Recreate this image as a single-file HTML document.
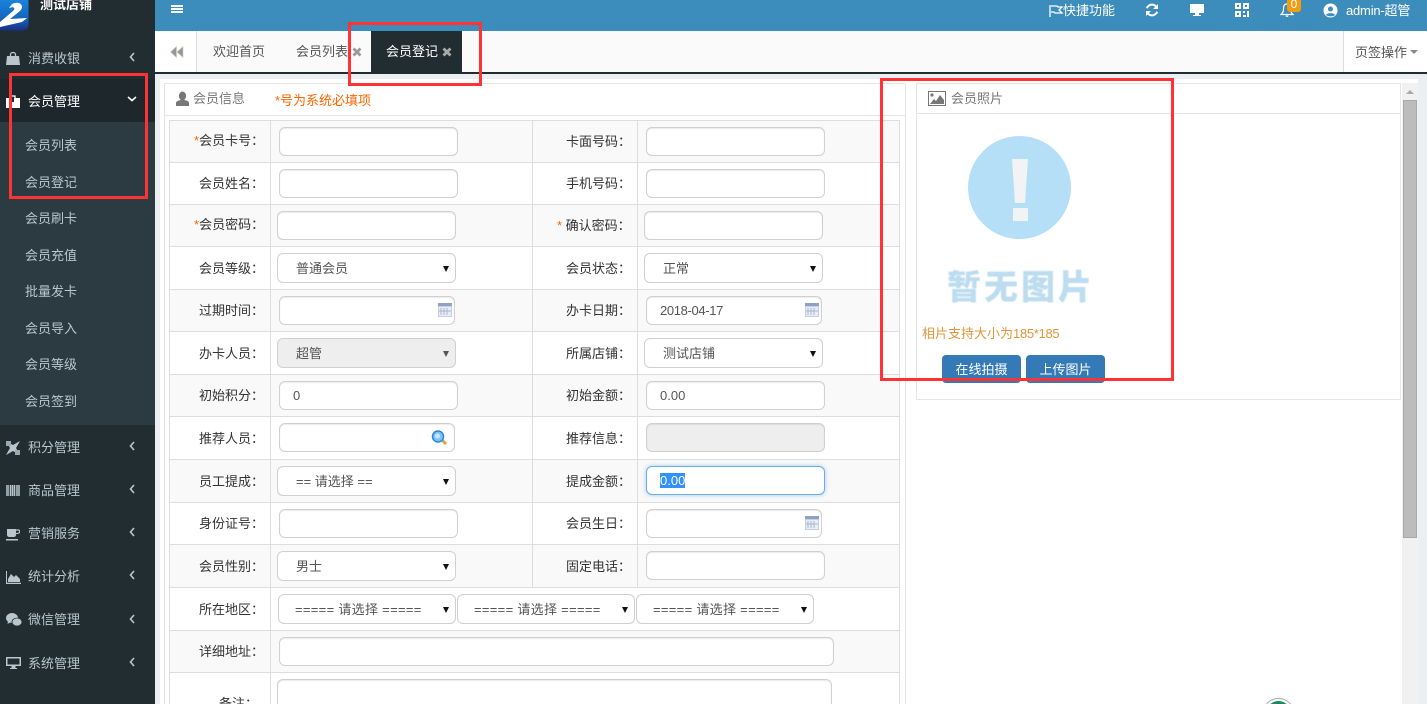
<!DOCTYPE html>
<html lang="zh"><head><meta charset="utf-8"><title>会员登记</title>
<style>
html,body{margin:0;padding:0;width:1427px;height:704px;overflow:hidden;background:#ebeff2}
body{position:relative;font:13px/16px "WenQuanYi Zen Hei","Liberation Sans","Noto Sans CJK SC",sans-serif;color:#333}
div,svg{position:absolute;box-sizing:border-box}
.t{white-space:nowrap;height:16px;margin-top:1px}
.s{color:#b8c7ce}
.w{color:#fff}
.g{color:#555}
.l{color:#333}
.r{color:#f60}
.h{height:1px;background:#ddd}
.v{width:1px;background:#ddd}
.b{background:#f9f9f9;height:42px}
.i,.sel{border:1px solid #d0d0d0;border-radius:6px;background:#fff;box-shadow:inset 0 1px 1px rgba(0,0,0,.075);color:#555;padding:0 0 0 13px;height:29px;line-height:27px;white-space:nowrap;font-family:"Liberation Sans","WenQuanYi Zen Hei",sans-serif}
.sel{height:30px;line-height:30px;box-shadow:none;padding-left:18px;font-family:"WenQuanYi Zen Hei","Liberation Sans",sans-serif}
.a{width:0;height:0;border-left:3px solid transparent;border-right:3px solid transparent;border-top:6px solid #111}
.chev{left:129px}
.red{border:3px solid #f33;z-index:10;background:none}
</style></head><body>

<!-- header -->
<div style="left:155px;top:0;width:1272px;height:31px;background:#3c8dbc"></div>
<div style="left:171px;top:5px;width:12px;height:2px;background:#fff"></div>
<div style="left:171px;top:8px;width:12px;height:2px;background:#fff"></div>
<div style="left:171px;top:11px;width:12px;height:2px;background:#fff"></div>
<svg style="left:1049px;top:4px" width="15" height="13" viewBox="0 0 15 13"><path d="M1 1V13M2 2H8L9 3H13L10 6L13 9H6L5 8H2" fill="none" stroke="#fff" stroke-width="1.3"/></svg>
<div class="t w" style="left:1063px;top:2px">快捷功能</div>
<svg style="left:1145px;top:3px" width="14" height="14" viewBox="0 0 14 14"><path d="M12 5.500A5.200 5.200 0 0 0 3 3.500L1.500 5M2 8.500A5.200 5.200 0 0 0 11 10.500L12.500 9" fill="none" stroke="#fff" stroke-width="2"/><path d="M13 1V6H8zM1 13V8H6z" fill="#fff"/></svg>
<svg style="left:1189px;top:3px" width="16" height="14" viewBox="0 0 16 14"><path d="M1 1H15V10H1z" fill="#fff"/><path d="M6 10H10V12H12V13H4V12H6z" fill="#fff"/></svg>
<svg style="left:1235px;top:3px" width="14" height="14" viewBox="0 0 14 14"><path d="M0 0H6V6H0zM8 0H14V6H8zM0 8H6V14H0z" fill="#fff"/><path d="M2 2H4V4H2zM10 2H12V4H10zM2 10H4V12H2z" fill="#3c8dbc"/><path d="M8 8H10V10H8zM12 8H14V14H12zM8 12H11V14H8z" fill="#fff"/></svg>
<svg style="left:1280px;top:3px" width="14" height="15" viewBox="0 0 14 15"><path d="M7 1C4 1 3.500 3 3.500 6C3.500 9 2.500 10 1 11.500H13C11.500 10 10.500 9 10.500 6C10.500 3 10 1 7 1z" fill="none" stroke="#fff" stroke-width="1.200"/><path d="M5.500 12.500A1.500 1.500 0 0 0 8.500 12.500z" fill="#fff"/></svg>
<div style="left:1287px;top:-2px;width:14px;height:14px;background:#f39c12;border-radius:3px;color:#fff;text-align:center;font:12px/12px 'Liberation Sans',sans-serif">0</div>
<svg style="left:1323px;top:3px" width="15" height="15" viewBox="0 0 15 15"><circle cx="7.500" cy="7.500" r="7" fill="#fff"/><circle cx="7.500" cy="6" r="2.500" fill="#3c8dbc"/><path d="M3 12C4 9.500 11 9.500 12 12C10 13.800 5 13.800 3 12z" fill="#3c8dbc"/></svg>
<div class="t w" style="left:1346px;top:2px;font-family:'Liberation Sans','WenQuanYi Zen Hei',sans-serif;font-size:13px;letter-spacing:-.2px">admin-超管</div>

<!-- tabs -->
<div style="left:155px;top:31px;width:1272px;height:41px;background:#fafafa"></div>
<div style="left:155px;top:31px;width:41px;height:41px;background:#fff"></div>
<div style="left:196px;top:31px;width:1px;height:41px;background:#ddd"></div>
<svg style="left:170px;top:46px" width="14" height="12" viewBox="0 0 14 12"><path d="M6.500 0.500V11.500L0.500 6zM13 0.500V11.500L7 6z" fill="#8a9aa8" stroke="#e8c79a" stroke-width=".6"/></svg>
<div class="t g" style="left:213px;top:43px">欢迎首页</div>
<div class="t g" style="left:296px;top:43px">会员列表</div>
<svg style="left:352px;top:47px" width="10" height="10" viewBox="0 0 10 10"><path d="M1.500 1.500L8.500 8.500M8.500 1.500L1.500 8.500" stroke="#999" stroke-width="2.800"/></svg>
<div style="left:371px;top:31px;width:91px;height:41px;background:#222d32"></div>
<div class="t w" style="left:386px;top:43px">会员登记</div>
<svg style="left:442px;top:47px" width="10" height="10" viewBox="0 0 10 10"><path d="M1.500 1.500L8.500 8.500M8.500 1.500L1.500 8.500" stroke="#aaa" stroke-width="2.800"/></svg>
<div style="left:1343px;top:31px;width:84px;height:41px;background:#fff;border-left:1px solid #ddd"></div>
<div class="t g" style="left:1355px;top:44px">页签操作</div>
<div style="left:1410px;top:50px;width:0;height:0;border-left:4px solid transparent;border-right:4px solid transparent;border-top:4px solid #888"></div>
<div style="left:155px;top:72px;width:1272px;height:2px;background:#222d32"></div>

<!-- content -->
<div style="left:160px;top:79px;width:1258px;height:625px;background:#fff"></div>

<!-- left panel -->
<div style="left:164px;top:83px;width:742px;height:621px;border:1px solid #e5e5e5;border-bottom:0"></div>
<div style="left:164px;top:115px;width:742px;height:1px;background:#e5e5e5"></div>
<svg style="left:176px;top:91px" width="13" height="16" viewBox="0 0 13 16"><ellipse cx="6.500" cy="5" rx="3.600" ry="4.500" fill="#777"/><path d="M0 15V12C0 10 3 9.500 4.500 9H8.500C10 9.500 13 10 13 12V15z" fill="#777"/></svg>
<div class="t" style="left:193px;top:90px;color:#777">会员信息</div>
<div class="t r" style="left:275px;top:92px">*号为系统必填项</div>

<!-- table bg -->
<div class="b" style="left:170px;top:121px;width:729px"></div>
<div class="b" style="left:170px;top:205px;width:729px"></div>
<div class="b" style="left:170px;top:290px;width:729px"></div>
<div class="b" style="left:170px;top:375px;width:729px"></div>
<div class="b" style="left:170px;top:460px;width:729px"></div>
<div class="b" style="left:170px;top:545px;width:729px"></div>
<div class="b" style="left:170px;top:631px;width:729px"></div>
<div class="h" style="left:169px;top:120px;width:731px"></div>
<div class="h" style="left:169px;top:162px;width:731px"></div>
<div class="h" style="left:169px;top:204px;width:731px"></div>
<div class="h" style="left:169px;top:246px;width:731px"></div>
<div class="h" style="left:169px;top:289px;width:731px"></div>
<div class="h" style="left:169px;top:331px;width:731px"></div>
<div class="h" style="left:169px;top:374px;width:731px"></div>
<div class="h" style="left:169px;top:416px;width:731px"></div>
<div class="h" style="left:169px;top:459px;width:731px"></div>
<div class="h" style="left:169px;top:502px;width:731px"></div>
<div class="h" style="left:169px;top:544px;width:731px"></div>
<div class="h" style="left:169px;top:587px;width:731px"></div>
<div class="h" style="left:169px;top:630px;width:731px"></div>
<div class="h" style="left:169px;top:672px;width:731px"></div>
<div class="v" style="left:169px;top:120px;height:584px"></div>
<div class="v" style="left:270px;top:120px;height:584px"></div>
<div class="v" style="left:532px;top:120px;height:467px"></div>
<div class="v" style="left:637px;top:120px;height:467px"></div>
<div class="v" style="left:899px;top:120px;height:584px"></div>

<!-- labels left -->
<div class="t" style="left:194px;top:132px"><span class="r">*</span>会员卡号：</div>
<div class="t" style="left:199px;top:175px">会员姓名：</div>
<div class="t" style="left:194px;top:216px"><span class="r">*</span>会员密码：</div>
<div class="t" style="left:199px;top:260px">会员等级：</div>
<div class="t" style="left:199px;top:302px">过期时间：</div>
<div class="t" style="left:199px;top:345px">办卡人员：</div>
<div class="t" style="left:199px;top:387px">初始积分：</div>
<div class="t" style="left:199px;top:430px">推荐人员：</div>
<div class="t" style="left:199px;top:473px">员工提成：</div>
<div class="t" style="left:199px;top:515px">身份证号：</div>
<div class="t" style="left:199px;top:558px">会员性别：</div>
<div class="t" style="left:199px;top:601px">所在地区：</div>
<div class="t" style="left:199px;top:643px">详细地址：</div>
<div class="t" style="left:219px;top:695px">备注：</div>

<!-- labels right -->
<div class="t" style="left:566px;top:133px">卡面号码：</div>
<div class="t" style="left:566px;top:175px">手机号码：</div>
<div class="t" style="left:557px;top:217px"><span class="r">*</span> 确认密码：</div>
<div class="t" style="left:566px;top:260px">会员状态：</div>
<div class="t" style="left:566px;top:302px">办卡日期：</div>
<div class="t" style="left:566px;top:345px">所属店铺：</div>
<div class="t" style="left:566px;top:387px">初始金额：</div>
<div class="t" style="left:566px;top:430px">推荐信息：</div>
<div class="t" style="left:566px;top:473px">提成金额：</div>
<div class="t" style="left:566px;top:515px">会员生日：</div>
<div class="t" style="left:566px;top:558px">固定电话：</div>

<!-- inputs left -->
<div class="i" style="left:279px;top:127px;width:179px"></div>
<div class="i" style="left:279px;top:169px;width:179px"></div>
<div class="i" style="left:277px;top:211px;width:179px"></div>
<div class="sel" style="left:277px;top:253px;width:179px">普通会员<div class="a" style="left:165px;top:12px"></div></div>
<div class="i" style="left:279px;top:296px;width:176px"></div>
<div class="sel" style="left:277px;top:338px;width:179px;background:#eee">超管<div class="a" style="left:165px;top:12px;border-top-color:#555"></div></div>
<div class="i" style="left:279px;top:381px;width:179px">0</div>
<div class="i" style="left:279px;top:423px;width:176px"></div>
<div class="sel" style="left:277px;top:466px;width:179px">== 请选择 ==<div class="a" style="left:165px;top:12px"></div></div>
<div class="i" style="left:279px;top:509px;width:179px"></div>
<div class="sel" style="left:277px;top:551px;width:179px">男士<div class="a" style="left:165px;top:12px"></div></div>
<div class="sel" style="left:278px;top:594px;width:178px;padding-left:16px;letter-spacing:.3px">===== 请选择 =====<div class="a" style="left:164px;top:12px"></div></div>
<div class="sel" style="left:457px;top:594px;width:178px;padding-left:16px;letter-spacing:.3px">===== 请选择 =====<div class="a" style="left:164px;top:12px"></div></div>
<div class="sel" style="left:636px;top:594px;width:178px;padding-left:16px;letter-spacing:.3px">===== 请选择 =====<div class="a" style="left:164px;top:12px"></div></div>
<div class="i" style="left:279px;top:637px;width:555px"></div>
<div class="i" style="left:277px;top:679px;width:555px;height:60px"></div>

<!-- inputs right -->
<div class="i" style="left:646px;top:127px;width:179px"></div>
<div class="i" style="left:646px;top:169px;width:179px"></div>
<div class="i" style="left:644px;top:211px;width:179px"></div>
<div class="sel" style="left:644px;top:253px;width:179px">正常<div class="a" style="left:165px;top:12px"></div></div>
<div class="i" style="left:646px;top:296px;width:176px;letter-spacing:-.35px">2018-04-17</div>
<div class="sel" style="left:644px;top:338px;width:179px">测试店铺<div class="a" style="left:165px;top:12px"></div></div>
<div class="i" style="left:646px;top:381px;width:179px">0.00</div>
<div class="i" style="left:646px;top:423px;width:179px;background:#eee"></div>
<div class="i" style="left:646px;top:466px;width:179px;border-color:#66afe9;box-shadow:0 0 5px rgba(102,175,233,.6)"><span style="background:#3390ff;color:#fff">0.00</span></div>
<div class="i" style="left:646px;top:509px;width:176px"></div>
<div class="i" style="left:646px;top:551px;width:179px"></div>

<!-- calendar icons -->
<svg style="left:438px;top:303px" width="14" height="14" viewBox="0 0 14 14"><rect width="14" height="14" fill="#c5cfe2"/><rect y="0" width="14" height="3" fill="#8fa1c4"/><path d="M1 4H13V13H1z" fill="#e9edf5"/><path d="M3 5V12M6 5V12M9 5V12M1 8H13" stroke="#a9b6d2"/></svg>
<svg style="left:805px;top:303px" width="14" height="14" viewBox="0 0 14 14"><rect width="14" height="14" fill="#c5cfe2"/><rect y="0" width="14" height="3" fill="#8fa1c4"/><path d="M1 4H13V13H1z" fill="#e9edf5"/><path d="M3 5V12M6 5V12M9 5V12M1 8H13" stroke="#a9b6d2"/></svg>
<svg style="left:805px;top:516px" width="14" height="14" viewBox="0 0 14 14"><rect width="14" height="14" fill="#c5cfe2"/><rect y="0" width="14" height="3" fill="#8fa1c4"/><path d="M1 4H13V13H1z" fill="#e9edf5"/><path d="M3 5V12M6 5V12M9 5V12M1 8H13" stroke="#a9b6d2"/></svg>
<!-- search icon -->
<svg style="left:431px;top:430px" width="17" height="16" viewBox="0 0 17 16"><path d="M11 10L15 14" stroke="#e0a040" stroke-width="3"/><circle cx="7" cy="6.500" r="5.500" fill="#7fc4f8" stroke="#2a86dc" stroke-width="1.500"/><circle cx="6.500" cy="6" r="2.500" fill="#c5e6ff"/></svg>

<!-- right panel -->
<div style="left:916px;top:83px;width:485px;height:317px;border:1px solid #e5e5e5"></div>
<div style="left:916px;top:113px;width:485px;height:1px;background:#e5e5e5"></div>
<svg style="left:928px;top:91px" width="18" height="15" viewBox="0 0 18 15"><rect x=".5" y=".5" width="17" height="14" fill="#fff" stroke="#777"/><circle cx="4" cy="4" r="1.600" fill="#777"/><path d="M2 13L6 8L8 10L12 4L16 9V13z" fill="#777"/></svg>
<div class="t" style="left:951px;top:90px;color:#777">会员照片</div>

<!-- placeholder -->
<div style="left:968px;top:136px;width:103px;height:103px;border-radius:50%;background:#b5dff7"></div>
<svg style="left:1010px;top:157px" width="20" height="66" viewBox="0 0 20 66"><path d="M2 2H18L15 46H5z" fill="#f1f3f4"/><rect x="3" y="51" width="15" height="13" fill="#f1f3f4"/></svg>
<div class="t" style="left:947px;top:264px;height:40px;font:900 34px/40px 'Noto Sans CJK SC',sans-serif;letter-spacing:3px;color:#bcdcef;filter:blur(.5px)">暂无图片</div>

<div class="t" style="left:922px;top:325px;color:#e0963a;font-family:'Liberation Sans','WenQuanYi Zen Hei',sans-serif">相片支持大小为<span style="letter-spacing:-.3px">185*185</span></div>
<div class="w" style="left:942px;top:355px;width:79px;height:28px;background:#337ab7;border-radius:4px;text-align:center;line-height:28px;padding-top:1px">在线拍摄</div>
<div class="w" style="left:1026px;top:355px;width:79px;height:28px;background:#337ab7;border-radius:4px;text-align:center;line-height:28px;padding-top:1px">上传图片</div>

<!-- green seal -->
<div style="left:1262px;top:698px;width:33px;height:33px;border-radius:50%;border:1px solid #aaa;background:#fff"></div>
<div style="left:1266px;top:701px;width:25px;height:25px;border-radius:50%;background:#1a8a5a"></div>

<!-- scrollbar -->
<div style="left:1402px;top:83px;width:16px;height:621px;background:#f1f1f1"></div>
<div style="left:1406px;top:90px;width:0;height:0;border-left:4px solid transparent;border-right:4px solid transparent;border-bottom:4px solid #a8a8a8"></div>
<div style="left:1403px;top:100px;width:14px;height:438px;background:#bcbcbc;border:1px solid #a8a8a8"></div>

<!-- sidebar -->
<div style="left:0;top:0;width:155px;height:704px;background:#222d32"></div>
<div style="left:0;top:79px;width:155px;height:43px;background:#1e282c"></div>
<div style="left:0;top:122px;width:155px;height:303px;background:#2c3b41"></div>

<svg style="left:0;top:0" width="29" height="31" viewBox="0 0 29 31"><defs><linearGradient id="lg" x1="0" y1="0" x2="0" y2="1"><stop offset="0" stop-color="#1a8ae0"/><stop offset=".65" stop-color="#1565c0"/><stop offset="1" stop-color="#1a2f80"/></linearGradient></defs><rect x="-4" y="-4" width="32.500" height="34.500" rx="6" fill="url(#lg)"/><path d="M12 4C20 0 25 6 20 11L10 19L27 18L22 22L0 27V22L13 11C16 8 14 6 9 8z" fill="#fff"/></svg>
<div class="t w" style="left:40px;top:-4px;font-weight:bold">测试店铺</div>

<!-- sidebar icons -->
<svg style="left:6px;top:51px" width="14" height="14" viewBox="0 0 14 14"><path d="M1 5H13L14 14H0z" fill="#b8c7ce"/><path d="M4.500 6V3.500C4.500 0.800 9.500 0.800 9.500 3.500V6" fill="none" stroke="#b8c7ce" stroke-width="1.300"/></svg>
<svg style="left:6px;top:95px" width="14" height="13" viewBox="0 0 14 13"><path d="M0 3H14V13H0z" fill="#fff"/><path d="M5 3V1H9V3" fill="none" stroke="#fff" stroke-width="1.300"/><path d="M6 3H8V7H6z" fill="#1e282c"/></svg>
<svg style="left:6px;top:441px" width="14" height="14" viewBox="0 0 14 14"><path d="M0 0L7 4L14 0L10 7L14 14L7 10L0 14L4 7z" fill="#b8c7ce"/><path d="M0 0H5V5H0zM9 9H14V14H9z" fill="#9aa9b0"/></svg>
<svg style="left:6px;top:484px" width="14" height="13" viewBox="0 0 14 13"><path d="M0 1V12M2 1V12M4.500 1V12M6.500 1V12M8.500 1V12M11 1V12M13 1V12" stroke="#b8c7ce" stroke-width="1.500"/></svg>
<svg style="left:6px;top:528px" width="14" height="13" viewBox="0 0 14 13"><path d="M1 1H10V7C10 8 9 9 8 9H3C2 9 1 8 1 7z" fill="#b8c7ce"/><path d="M10 2H12.500C13.500 2 14 3 13.500 4.500C13 5.500 11.500 5.500 10 5.500" fill="none" stroke="#b8c7ce" stroke-width="1.300"/><path d="M0 11H12V12.500H0z" fill="#b8c7ce"/></svg>
<svg style="left:6px;top:571px" width="15" height="13" viewBox="0 0 15 13"><path d="M0 0V13H15V11.800H1V0z" fill="#b8c7ce"/><path d="M2 11L2 8L5 3L8 6L10 4L14 8V11z" fill="#b8c7ce"/></svg>
<svg style="left:6px;top:613px" width="16" height="14" viewBox="0 0 16 14"><ellipse cx="6" cy="5" rx="6" ry="5" fill="#b8c7ce"/><ellipse cx="11" cy="9" rx="5" ry="4" fill="#b8c7ce" stroke="#222d32" stroke-width=".8"/><path d="M2 8L1.500 11L5 9z" fill="#b8c7ce"/></svg>
<svg style="left:6px;top:656px" width="15" height="14" viewBox="0 0 15 14"><path d="M0 1H15V10H0z" fill="#b8c7ce"/><path d="M1.500 2.500H13.500V8.500H1.500z" fill="#222d32"/><path d="M5.500 10H9.500V12H11V13H4V12H5.500z" fill="#b8c7ce"/></svg>

<!-- sidebar text -->
<div class="t s" style="left:28px;top:50px">消费收银</div>
<div class="t w" style="left:28px;top:93px">会员管理</div>
<div class="t s" style="left:25px;top:137px">会员列表</div>
<div class="t s" style="left:25px;top:174px">会员登记</div>
<div class="t s" style="left:25px;top:210px">会员刷卡</div>
<div class="t s" style="left:25px;top:247px">会员充值</div>
<div class="t s" style="left:25px;top:283px">批量发卡</div>
<div class="t s" style="left:25px;top:320px">会员导入</div>
<div class="t s" style="left:25px;top:356px">会员等级</div>
<div class="t s" style="left:25px;top:393px">会员签到</div>
<div class="t s" style="left:28px;top:439px">积分管理</div>
<div class="t s" style="left:28px;top:482px">商品管理</div>
<div class="t s" style="left:28px;top:525px">营销服务</div>
<div class="t s" style="left:28px;top:568px">统计分析</div>
<div class="t s" style="left:28px;top:611px">微信管理</div>
<div class="t s" style="left:28px;top:655px">系统管理</div>

<!-- chevrons -->
<svg class="chev" style="top:52px" width="6" height="10" viewBox="0 0 6 10"><path d="M5 1L1.500 5L5 9" fill="none" stroke="#b8c7ce" stroke-width="1.600"/></svg>
<svg style="left:127px;top:96px" width="10" height="6" viewBox="0 0 10 6"><path d="M1 1L5 4.500L9 1" fill="none" stroke="#fff" stroke-width="1.600"/></svg>
<svg class="chev" style="top:441px" width="6" height="10" viewBox="0 0 6 10"><path d="M5 1L1.500 5L5 9" fill="none" stroke="#b8c7ce" stroke-width="1.600"/></svg>
<svg class="chev" style="top:484px" width="6" height="10" viewBox="0 0 6 10"><path d="M5 1L1.500 5L5 9" fill="none" stroke="#b8c7ce" stroke-width="1.600"/></svg>
<svg class="chev" style="top:527px" width="6" height="10" viewBox="0 0 6 10"><path d="M5 1L1.500 5L5 9" fill="none" stroke="#b8c7ce" stroke-width="1.600"/></svg>
<svg class="chev" style="top:570px" width="6" height="10" viewBox="0 0 6 10"><path d="M5 1L1.500 5L5 9" fill="none" stroke="#b8c7ce" stroke-width="1.600"/></svg>
<svg class="chev" style="top:614px" width="6" height="10" viewBox="0 0 6 10"><path d="M5 1L1.500 5L5 9" fill="none" stroke="#b8c7ce" stroke-width="1.600"/></svg>
<svg class="chev" style="top:657px" width="6" height="10" viewBox="0 0 6 10"><path d="M5 1L1.500 5L5 9" fill="none" stroke="#b8c7ce" stroke-width="1.600"/></svg>

<!-- red annotation boxes -->
<div class="red" style="left:9px;top:73px;width:139px;height:126px"></div>
<div class="red" style="left:348px;top:22px;width:134px;height:64px"></div>
<div class="red" style="left:880px;top:78px;width:294px;height:303px"></div>

</body></html>
